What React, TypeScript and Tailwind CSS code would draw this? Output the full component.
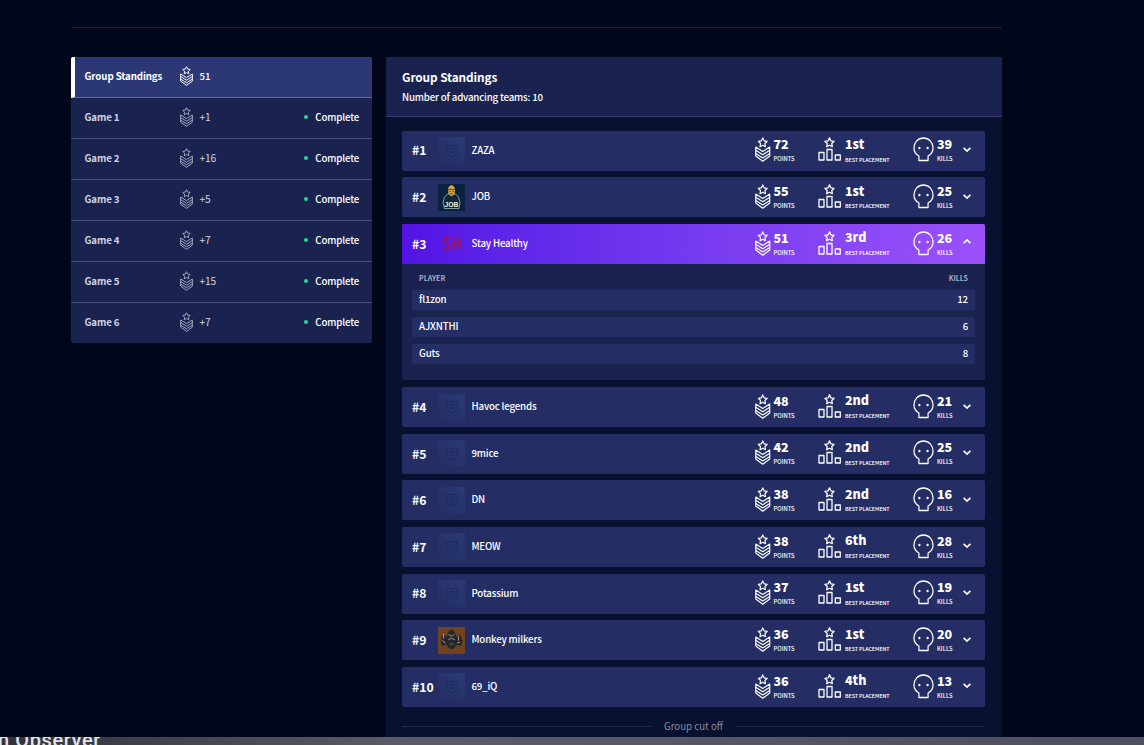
import { useState } from "react";
import clsx from "clsx";

type Player = { name: string; kills: number };

type Team = {
  name: string;
  points: number;
  placement: string;
  kills: number;
  logo?: "job" | "sh" | "monkey";
  players?: Player[];
};

const games = [
  { label: "Game 1", points: "+1" },
  { label: "Game 2", points: "+16" },
  { label: "Game 3", points: "+5" },
  { label: "Game 4", points: "+7" },
  { label: "Game 5", points: "+15" },
  { label: "Game 6", points: "+7" },
];

const teams: Team[] = [
  { name: "ZAZA", points: 72, placement: "1st", kills: 39 },
  { name: "JOB", points: 55, placement: "1st", kills: 25, logo: "job" },
  {
    name: "Stay Healthy",
    points: 51,
    placement: "3rd",
    kills: 26,
    logo: "sh",
    players: [
      { name: "fl1zon", kills: 12 },
      { name: "AJXNTHI", kills: 6 },
      { name: "Guts", kills: 8 },
    ],
  },
  { name: "Havoc legends", points: 48, placement: "2nd", kills: 21 },
  { name: "9mice", points: 42, placement: "2nd", kills: 25 },
  { name: "DN", points: 38, placement: "2nd", kills: 16 },
  { name: "MEOW", points: 38, placement: "6th", kills: 28 },
  { name: "Potassium", points: 37, placement: "1st", kills: 19 },
  { name: "Monkey milkers", points: 36, placement: "1st", kills: 20, logo: "monkey" },
  { name: "69_iQ", points: 36, placement: "4th", kills: 13 },
];

const STAR = "M8 .9l1.4 2.9 3.200.5-2.300 2.200.5 3.200L8 8.200 5.200 9.700l.5-3.200-2.300-2.200 3.200-.5z";

function RankIcon({ className }: { className?: string }) {
  return (
    <svg viewBox="0 0 16 25" fill="none" stroke="currentColor" strokeWidth="1.200" strokeLinejoin="round" preserveAspectRatio="none" className={className}>
      <path d={STAR} />
      <path d="M.8 10 8 14.500l7.200-4.500v8.900L8 24.200.8 18.900z" />
      <path d="M.8 13.200 8 17.800l7.200-4.600M.8 16.400 8 21l7.200-4.600" />
    </svg>
  );
}

function PodiumIcon() {
  return (
    <svg viewBox="0 0 24 25" fill="none" stroke="currentColor" strokeWidth="1.300" strokeLinejoin="round" className="h-[25px] w-6 shrink-0">
      <path d={STAR} transform="translate(3.500 0)" />
      <path d="M1 15.500h5v7.500H1zM9 12.500h5V23H9zM17.300 18h5v5h-5z" />
    </svg>
  );
}

function SkullIcon() {
  return (
    <svg viewBox="0 0 22 25" fill="none" stroke="currentColor" strokeWidth="1.300" strokeLinejoin="round" preserveAspectRatio="none" className="mr-px h-[25px] w-[21px] shrink-0">
      <path d="M6.200 23.500v-4.500C3 17.300 1 14.500 1 11 1 5.300 5.300 1 11 1s10 4.300 10 10c0 3.500-2 6.300-5.200 8v4.500z" />
      <circle cx="6.700" cy="11" r="1.200" fill="currentColor" stroke="none" />
      <circle cx="15.300" cy="11" r="1.200" fill="currentColor" stroke="none" />
    </svg>
  );
}

function Chevron({ open }: { open: boolean }) {
  return (
    <svg viewBox="0 0 8 5" fill="none" stroke="currentColor" strokeWidth="1.700" className={clsx("h-[5px] w-2", open && "rotate-180")}>
      <path d="M.6.800 4 4 7.400.800" />
    </svg>
  );
}

function TeamLogo({ logo }: { logo?: Team["logo"] }) {
  if (logo === "job") {
    return (
      <svg viewBox="0 0 27 27" className="size-[27px]">
        <rect width="27" height="27" fill="#082340" />
        <path d="M9.500 10 6.500 13 5 19l1.500 5.500H21l1-5.500-1.500-6-3-3z" fill="#12263a" stroke="#aeb9ba" strokeWidth=".8" />
        <path d="M10 6c0-6.500 7-6.500 7 0l-.5 4-3 2.500-3-2.500z" fill="#d7a44b" />
        <path d="M9.500 5.500h8M11 7.500h1.500m2 0H16M12 9.800h3" stroke="#513f2a" strokeWidth=".9" />
        <text x="13.500" y="22.500" textAnchor="middle" fontSize="6.800" fontWeight="700" fill="#f1efdf" fontFamily="Liberation Sans, sans-serif">
          JOB
        </text>
      </svg>
    );
  }
  if (logo === "sh") {
    return (
      <svg viewBox="0 0 27 27" className="size-[27px]" fill="none" stroke="#a3154a" strokeWidth="2">
        <path d="M12.500 7.500H8.500L6.500 9.500V11.500L11 14.500v3.500L9.500 19.500H5.500M16 7l-.5 13M21.500 7v13M16 13.500h5.500" />
      </svg>
    );
  }
  if (logo === "monkey") {
    return (
      <svg viewBox="0 0 27 27" className="size-[27px]">
        <rect width="27" height="27" fill="#70431f" />
        <path d="M2.500 14 4.500 8l4 1.500L11 4l2.500-1.500L16 4l2.500 5.500 4-1.500 2 6-1.500 5-4-1.500-3 3.500-2.500 1.500L11 21l-3-3.500-4 1.500z" fill="#25252a" />
        <path d="M5.500 6.500v5M3.500 13l4 3m13-7v4.500m1.500 1.500L19 16" stroke="#9f978b" strokeWidth="1" />
        <path d="M10.500 7.500 13 9l3.500-1.500M10 13l3.500-2 3.500 2M11.500 17h4" stroke="#77716c" strokeWidth="1.200" fill="none" />
      </svg>
    );
  }
  return (
    <div className="flex size-[27px] items-center justify-center bg-linear-to-bl from-[#2c3974] to-[#242e65]">
      <svg viewBox="0 0 12 14" fill="none" stroke="#202b5c" className="h-3.5 w-3">
        <path d="M1 1.500h10V8c0 2-2 3.500-5 5-3-1.500-5-3-5-5z" />
        <circle cx="6" cy="6.500" r="2.300" />
      </svg>
    </div>
  );
}

function Stat({ value, label, small }: { value: string | number; label: string; small?: boolean }) {
  return (
    <div className="flex flex-col">
      <span className="text-[12.500px] leading-4 font-black">{value}</span>
      <span
        className={clsx(
          "leading-2 font-medium whitespace-nowrap",
          small ? "mt-[3.500px] text-[5.400px] tracking-[-0.100px]" : "mt-[3px] text-[5.800px]"
        )}
      >
        {label}
      </span>
    </div>
  );
}

function TeamRow({ team, rank }: { team: Team; rank: number }) {
  const [open, setOpen] = useState(!!team.players);

  return (
    <li className="overflow-hidden rounded-[2px] bg-[#1a234f]">
      <button
        onClick={() => setOpen(!open)}
        className={clsx(
          "flex h-10 w-full items-center pl-2.5 text-left",
          open ? "bg-linear-to-r from-[#5312e4] to-[#9b51fa]" : "bg-[#242e65]"
        )}
      >
        <span className="w-[26px] text-[12.200px] font-bold">#{rank}</span>
        <TeamLogo logo={team.logo} />
        <span className="ml-[6.500px] flex-1 pb-[1.500px] text-[9.700px] font-medium tracking-[-0.170px]">{team.name}</span>
        <span className="flex w-[63px] items-center gap-[3px] pb-[1.600px]">
          <RankIcon className="h-[25px] w-[15.500px] shrink-0" />
          <Stat value={team.points} label="POINTS" />
        </span>
        <span className="flex w-[95px] items-center gap-[3px] pb-[1.600px]">
          <PodiumIcon />
          <Stat value={team.placement} label="BEST PLACEMENT" small />
        </span>
        <span className="flex w-[50px] items-center gap-[2px] pb-[1.600px]">
          <SkullIcon />
          <Stat value={team.kills} label="KILLS" />
        </span>
        <span className={clsx("mr-3.5", open ? "mb-1" : "mb-0.5")}>
          <Chevron open={open} />
        </span>
      </button>
      {open && (
        <div className="h-[116.450px] px-2.5 pt-2">
          <div className="flex justify-between px-[7px] text-[7px] leading-3 font-bold text-[#a9adc6]">
            <span>PLAYER</span>
            <span>KILLS</span>
          </div>
          <div className="mt-1.5 flex flex-col gap-[7px]">
            {team.players?.map((player) => (
              <div
                key={player.name}
                className="flex h-5 items-center justify-between rounded-[2px] bg-[#242e65] px-[7px] pb-px text-[9.700px] font-medium tracking-[-0.150px]"
              >
                <span>{player.name}</span>
                <span>{player.kills}</span>
              </div>
            ))}
          </div>
        </div>
      )}
    </li>
  );
}

function Sidebar() {
  return (
    <nav className="w-[301px] self-start overflow-hidden rounded-[2px] bg-[#1a234f] text-[9.700px] tracking-[-0.100px]">
      <div className="flex h-[41px] items-center border-b border-l-4 border-b-[#626993] border-l-white bg-[#2c3876] pb-0.5 pl-[9.500px]">
        <span className="w-[95px] font-bold">Group Standings</span>
        <RankIcon className="h-5 w-[13px]" />
        <span className="ml-[7px] font-medium">51</span>
      </div>
      {games.map((game) => (
        <div key={game.label} className="flex h-[41px] items-center border-b border-[#484f7c] pr-[13px] pb-0.5 pl-[13.500px] last:h-10 last:border-b-0">
          <span className="w-[95px] font-bold text-[#d1d3e3]">{game.label}</span>
          <RankIcon className="h-5 w-[13px] text-[#a6a9c5]" />
          <span className="ml-[7px] flex-1 text-[10.200px] text-[#d1d3e3]">{game.points}</span>
          <span className="mr-[7px] size-1 rounded-full bg-[#20dc99]" />
          <span className="font-medium tracking-[-0.150px]">Complete</span>
        </div>
      ))}
    </nav>
  );
}

export default function App() {
  return (
    <div className="flex h-[745px] w-[1144px] flex-col overflow-hidden bg-[#00071a] font-['Noto_Sans_CJK_SC',sans-serif] text-white">
      <main className="h-[737px] overflow-hidden pt-[27px] pl-[71px]">
        <div className="h-px w-[931px] bg-[#1a202f]" />
        <div className="mt-[29px] flex h-[700px] gap-3.5">
          <Sidebar />
          <section className="w-[616px] bg-[#081130]">
            <header className="h-[60px] border-b border-[#323b6b] bg-[#1a234f] px-4 pt-3">
              <h2 className="text-[11.800px] leading-4 font-bold tracking-[-0.080px]">Group Standings</h2>
              <p className="mt-1 text-[9.700px] leading-4 font-medium tracking-[-0.170px]">Number of advancing teams: 10</p>
            </header>
            <ul className="flex flex-col gap-[6.670px] pt-[13.600px] pr-[17px] pl-4">
              {teams.map((team, i) => (
                <TeamRow key={team.name} team={team} rank={i + 1} />
              ))}
            </ul>
            <div className="mt-3 flex items-center gap-[13px] pr-[17px] pl-4 text-[9.700px] leading-4 text-[#878ca1]">
              <div className="h-px flex-1 bg-[#222b43]" />
              <span className="-mt-px">Group cut off</span>
              <div className="h-px flex-1 bg-[#222b43]" />
            </div>
          </section>
        </div>
      </main>
      <footer className="h-2 overflow-hidden bg-linear-to-r from-[#30323b] via-[#5b5c69] via-35% to-[#4d505c]">
        <p className="-mt-[7px] -ml-0.5 font-[Roboto,sans-serif] text-[20px] leading-5 font-medium tracking-[0.600px] text-[#e4e4e6]">n Observer</p>
      </footer>
    </div>
  );
}
